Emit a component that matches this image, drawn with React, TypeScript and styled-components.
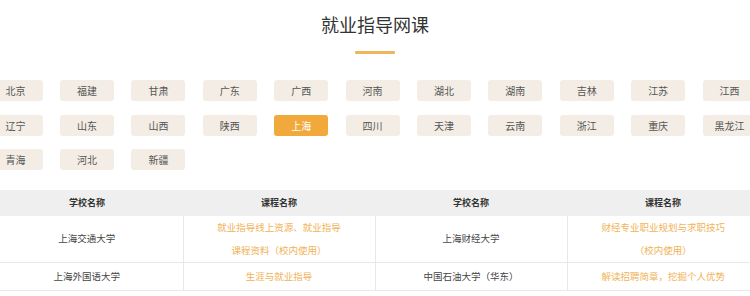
import React from 'react';
import styled, { createGlobalStyle } from 'styled-components';

const GlobalStyle = createGlobalStyle`
  html, body {
    margin: 0;
    padding: 0;
    background: #ffffff;
  }
  body {
    font-family: "Noto Sans CJK SC", "Noto Sans", sans-serif;
  }
`;

const Page = styled.div`
  width: 750px;
  height: 296px;
  overflow: hidden;
  background: #fff;
`;

const Title = styled.h2`
  margin: 12px 0 0;
  font-size: 18px;
  line-height: 24px;
  font-weight: 400;
  color: #333;
  text-align: center;
`;

const TitleBar = styled.div`
  width: 40px;
  height: 3px;
  margin: 15px auto 0;
  background: #efb55a;
  border-radius: 1px;
`;

const ProvinceGrid = styled.div`
  display: grid;
  grid-template-columns: repeat(11, 54px);
  column-gap: 17.4px;
  row-gap: 13.5px;
  width: 768px;
  margin: 26px 0 0 -11.4px;
`;

const ProvinceButton = styled.div<{ $active?: boolean }>`
  height: 21px;
  line-height: 21px;
  border-radius: 3px;
  text-align: center;
  font-size: 10px;
  color: ${(p) => (p.$active ? '#fff' : '#555')};
  background: ${(p) => (p.$active ? '#f2a93b' : '#f3ede5')};
  cursor: pointer;
`;

const Table = styled.table`
  width: 768px;
  margin: 19.5px 0 0 -9px;
  border-collapse: collapse;
  table-layout: fixed;
  font-size: 9.5px;
`;

const HeadCell = styled.th`
  height: 26px;
  padding: 0;
  background: #efefef;
  color: #333;
  font-weight: 700;
  font-size: 9px;
  text-align: center;
`;

const Cell = styled.td<{ $course?: boolean }>`
  padding: 0 18px;
  border-bottom: 1px solid #e8e8e8;
  border-left: 1px solid #e8e8e8;
  text-align: center;
  line-height: 23px;
  color: ${(p) => (p.$course ? '#f0b357' : '#444')};

  &:first-child {
    border-left: none;
  }
`;

const Row = styled.tr<{ $h: number }>`
  height: ${(p) => p.$h}px;
`;

const provinces = [
  '北京', '福建', '甘肃', '广东', '广西', '河南', '湖北', '湖南', '吉林', '江苏', '江西',
  '辽宁', '山东', '山西', '陕西', '上海', '四川', '天津', '云南', '浙江', '重庆', '黑龙江',
  '青海', '河北', '新疆',
];

const rows = [
  {
    h: 47,
    a: '上海交通大学',
    ac: ['就业指导线上资源、就业指导', '课程资料（校内使用）'],
    b: '上海财经大学',
    bc: ['财经专业职业规划与求职技巧', '（校内使用）'],
  },
  {
    h: 28,
    a: '上海外国语大学',
    ac: ['生涯与就业指导'],
    b: '中国石油大学（华东）',
    bc: ['解读招聘简章，挖掘个人优势'],
  },
];

export default function App() {
  return (
    <Page>
      <GlobalStyle />
      <Title>就业指导网课</Title>
      <TitleBar />
      <ProvinceGrid>
        {provinces.map((p) => (
          <ProvinceButton key={p} $active={p === '上海'}>
            {p}
          </ProvinceButton>
        ))}
      </ProvinceGrid>
      <Table>
        <thead>
          <tr>
            <HeadCell>学校名称</HeadCell>
            <HeadCell>课程名称</HeadCell>
            <HeadCell>学校名称</HeadCell>
            <HeadCell>课程名称</HeadCell>
          </tr>
        </thead>
        <tbody>
          {rows.map((r) => (
            <Row key={r.a} $h={r.h}>
              <Cell>{r.a}</Cell>
              <Cell $course>
                {r.ac.map((l) => (
                  <div key={l}>{l}</div>
                ))}
              </Cell>
              <Cell>{r.b}</Cell>
              <Cell $course>
                {r.bc.map((l) => (
                  <div key={l}>{l}</div>
                ))}
              </Cell>
            </Row>
          ))}
        </tbody>
      </Table>
    </Page>
  );
}
